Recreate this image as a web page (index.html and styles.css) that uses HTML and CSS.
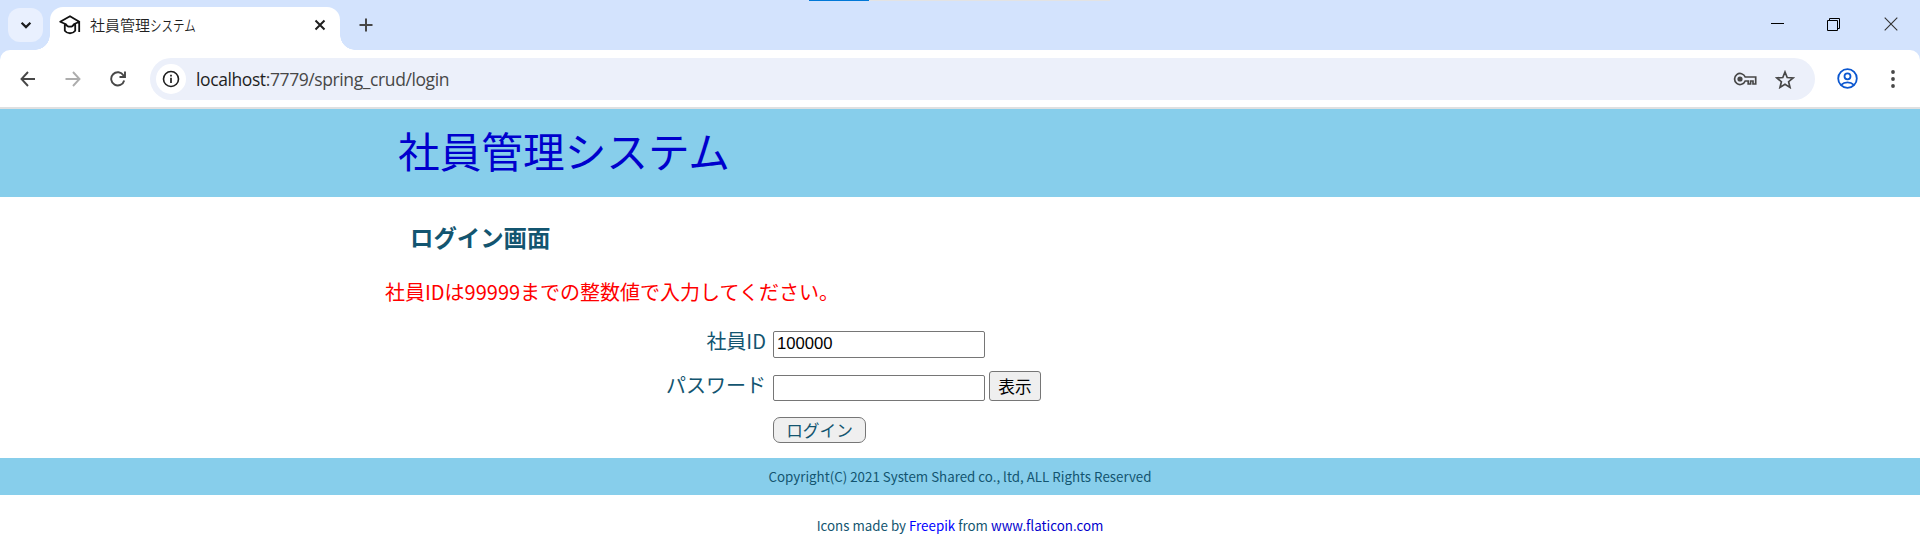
FILE: index.html
```html
<!DOCTYPE html>
<html lang="ja">
<head>
<meta charset="utf-8">
<title>社員管理システム</title>
<link rel="stylesheet" href="styles.css">
</head>
<body>
<div class="browser">
  <div class="tabstrip">
    <div class="tab-search"><svg width="35" height="35" viewBox="0 0 35 35"><path d="M13.6 14.7l4.4 4.4 4.4-4.4" fill="none" stroke="#1b1c1d" stroke-width="2.2"/></svg></div>
    <div class="tab">
      <svg class="favicon" width="22" height="20" viewBox="0 0 22 20"><path d="M1.2 6.7L11 1.2l9.300 5.500-5.500 2.600C13.500 12.500 8.500 12.500 7 9.300zM5.800 9v6.700c2.600 3.400 7.800 3.400 10.400 0V9M20.200 7v10" fill="none" stroke="#111" stroke-width="1.800" stroke-linejoin="round"/></svg>
      <span class="tab-title">社員管理<span class="narrow">システム</span></span>
      <svg class="tab-close" width="12" height="12" viewBox="0 0 12 12"><path d="M1.500 1.500l9 9M10.500 1.500l-9 9" stroke="#1f1f1f" stroke-width="2"/></svg>
    </div>
    <svg class="new-tab" width="14" height="14" viewBox="0 0 14 14"><path d="M7 .5v13M.5 7h13" stroke="#474747" stroke-width="2"/></svg>
    <div class="window-controls">
      <svg class="minimize" width="14" height="14" viewBox="0 0 14 14"><path d="M0 6.500h13" stroke="#000"/></svg>
      <svg class="restore" width="14" height="14" viewBox="0 0 14 14"><path d="M.5 3.500h10v10H.5zM2.500 3.500V1.500h10v10h-2" fill="none" stroke="#000"/></svg>
      <svg width="14" height="14" viewBox="0 0 14 14"><path d="M.7.7l12.600 12.600M13.300.7L.7 13.300" stroke="#333" stroke-width="1.100"/></svg>
    </div>
    <div class="progress"><div class="progress-value"></div></div>
  </div>
  <div class="toolbar-back">
    <div class="toolbar">
      <svg class="nav back" width="16" height="16" viewBox="0 0 16 16"><path d="M15 8H1.700M8 1L1.500 8 8 15" fill="none" stroke="#474747" stroke-width="1.900"/></svg>
      <svg class="nav forward" width="16" height="16" viewBox="0 0 16 16"><path d="M.5 8h13.800M8 1l6.500 7L8 15" fill="none" stroke="#adadad" stroke-width="1.900"/></svg>
      <svg class="nav reload" width="16" height="16" viewBox="0 0 16 16"><path d="M14.200 9.500A6.600 6.600 0 1 1 13.500 4.500L14.500 6M15 .5V6H9.500" fill="none" stroke="#474747" stroke-width="1.900"/></svg>
      <div class="address">
        <span class="site-info"><svg width="18" height="18" viewBox="0 0 18 18"><circle cx="9" cy="9" r="7.500" fill="none" stroke="#1f1f1f" stroke-width="1.600"/><path d="M9 7.700V13M9 4.700v1.800" stroke="#1f1f1f" stroke-width="1.700"/></svg></span>
        <span class="url"><span class="host">localhost</span>:7779/spring_crud/login</span>
        <svg class="key" width="24" height="14" viewBox="0 0 24 14"><path d="M12.200 5H22.700V12H20V9H17.600V12H15.200V9H12.200A5.500 5.500 0 1 1 12.200 5z" fill="none" stroke="#474747" stroke-width="1.700"/><circle cx="7" cy="7" r="2.600" fill="#474747"/></svg>
        <svg class="star" width="20" height="19" viewBox="0 0 20 19"><path d="M10 2l2.200 5.500 5.900.4-4.500 3.800 1.400 5.700-5-3.100-5 3.100 1.400-5.700L1.900 7.900l5.900-.4z" fill="none" stroke="#474747" stroke-width="1.700"/></svg>
      </div>
      <svg class="profile" width="21" height="21" viewBox="0 0 21 21"><g fill="none" stroke="#0b57d0" stroke-width="1.800"><circle cx="10.500" cy="10.500" r="9.300"/><circle cx="10.500" cy="8.300" r="3"/><path d="M4.200 16.800c3.300-3.200 9.300-3.200 12.600 0"/></g></svg>
      <svg class="more" width="4" height="18" viewBox="0 0 4 18"><g fill="#474747"><circle cx="2" cy="2" r="1.900"/><circle cx="2" cy="9" r="1.900"/><circle cx="2" cy="16" r="1.900"/></g></svg>
    </div>
  </div>
</div>
<header class="site-header"><a class="site-title" href="#">社員管理システム</a></header>
<main class="content">
  <h1 class="page-title">ログイン画面</h1>
  <p class="error">社員IDは99999までの整数値で入力してください。</p>
  <form class="login-form">
    <label class="label" for="id">社員ID</label>
    <input class="field field-id" id="id" type="text" value="100000">
    <label class="label label-pass" for="pass">パスワード</label>
    <div class="pass-row"><input class="field" id="pass" type="password"><button class="show" type="button">表示</button></div>
    <button class="submit" type="button">ログイン</button>
  </form>
</main>
<footer class="footer">Copyright(C) 2021 System Shared co., ltd, ALL Rights Reserved</footer>
<p class="credit">Icons made by <a class="link-bright" href="#">Freepik</a> from <a href="#">www.flaticon.com</a></p>
</body>
</html>
```
FILE: styles.css
```css
* { box-sizing: border-box; }
body { margin: 0; background: #fff; color: #135570; font-family: "Noto Sans CJK JP", sans-serif; font-size: 20px; overflow: hidden; }
svg { display: block; flex: none; }
a { color: #0000cd; text-decoration: none; }
.browser { height: 109px; border-bottom: 2px solid #dfe0e1; }
.tabstrip { position: relative; display: flex; height: 50px; background: #d3e3fd; padding-left: 8px; }
.tab-search { width: 35px; height: 34px; margin-top: 8px; border-radius: 12px; background: #e9f0fe; }
.tab { position: relative; display: flex; align-items: center; width: 290px; height: 43px; margin: 7px 0 0 7px; padding: 0 14px 7px 9px; border-radius: 13px 13px 0 0; background: #fff; }
.tab::before, .tab::after { content: ""; position: absolute; bottom: 0; width: 15px; height: 15px; }
.tab::before { left: -15px; background: radial-gradient(circle at 0 0, transparent 14.5px, #fff 15px); }
.tab::after { right: -15px; background: radial-gradient(circle at 100% 0, transparent 14.5px, #fff 15px); }
.tab-title { margin-left: 9px; width: 110px; color: #1f1f1f; font-size: 15px; font-weight: 350; white-space: nowrap; line-height: 20px; }
.narrow { display: inline-block; transform: scaleX(.77); transform-origin: left; }
.tab-close { margin-left: auto; }
.new-tab { margin: 18px 0 0 19px; }
.window-controls { display: flex; margin: 17px 22px 0 auto; }
.minimize { margin-right: 42px; }
.restore { margin-right: 43px; }
.progress { position: absolute; top: 0; left: 809px; width: 301px; height: 1px; background: #e3e3e3; }
.progress-value { width: 60px; height: 1px; background: #0078d7; }
.toolbar-back { background: #d3e3fd; }
.toolbar { display: flex; align-items: center; height: 57px; padding: 0 25px 0 20px; background: #fff; border-radius: 10px 10px 0 0; }
.forward { margin-left: 29px; }
.reload { margin-left: 29px; }
.address { display: flex; align-items: center; flex: 1; height: 42px; margin: 1px 22px 0 24px; padding: 0 20px 0 6px; border-radius: 21px; background: #ecf0fa; }
.site-info { display: grid; place-items: center; width: 30px; height: 30px; border-radius: 50%; background: #fff; }
.url { margin-left: 10px; color: #474747; font: 17.500px/24px "Open Sans", sans-serif; letter-spacing: -.4px; }
.host { color: #1f1f1f; }
.key { margin-left: auto; }
.star { margin-left: 18px; }
.more { margin-left: 33px; }
.site-header { height: 88px; padding-left: 398px; background: #87ceeb; }
.site-title { display: block; font-size: 41.670px; line-height: 82px; }
.content { width: 1150px; height: 261px; margin-left: 385px; }
.page-title { margin: 0; padding: 23px 0 0 25px; font-size: 23.400px; line-height: 34px; }
.error { margin: 23px 0 0; color: #f00; line-height: 30px; }
.login-form { display: grid; grid-template-columns: 381px auto; grid-template-rows: 27px 30px 26px; column-gap: 7px; row-gap: 13px; margin-top: 24px; }
.label { text-align: right; line-height: 20px; }
.label-pass { padding-top: 4px; }
.field { width: 212px; height: 26px; padding: 1px 4px; border: 1px solid #767676; border-radius: 2px; color: #000; background: #fff; font: 16.670px "Liberation Sans", sans-serif; }
.field-id { height: 27px; padding: 1px 3px 3px; }
.pass-row { display: flex; align-items: flex-end; gap: 4px; }
.show { width: 52px; height: 30px; padding: 0; border: 1px solid #767676; border-radius: 3px; background: #efefef; color: #000; font: 16.670px/24px "Noto Sans CJK JP", sans-serif; }
.submit { grid-column: 2; width: 93px; height: 26px; margin-top: 3px; padding: 0; border: 1px solid #767676; border-radius: 7px; background: #efefef; color: #135570; font: 16.670px/24px "Noto Sans CJK JP", sans-serif; }
.footer { height: 37px; background: #87ceeb; text-align: center; font-size: 13.330px; line-height: 37px; }
.credit { margin: 21px 0 0; text-align: center; font-size: 13.330px; line-height: 20px; }
.link-bright { color: #00f; }
```
